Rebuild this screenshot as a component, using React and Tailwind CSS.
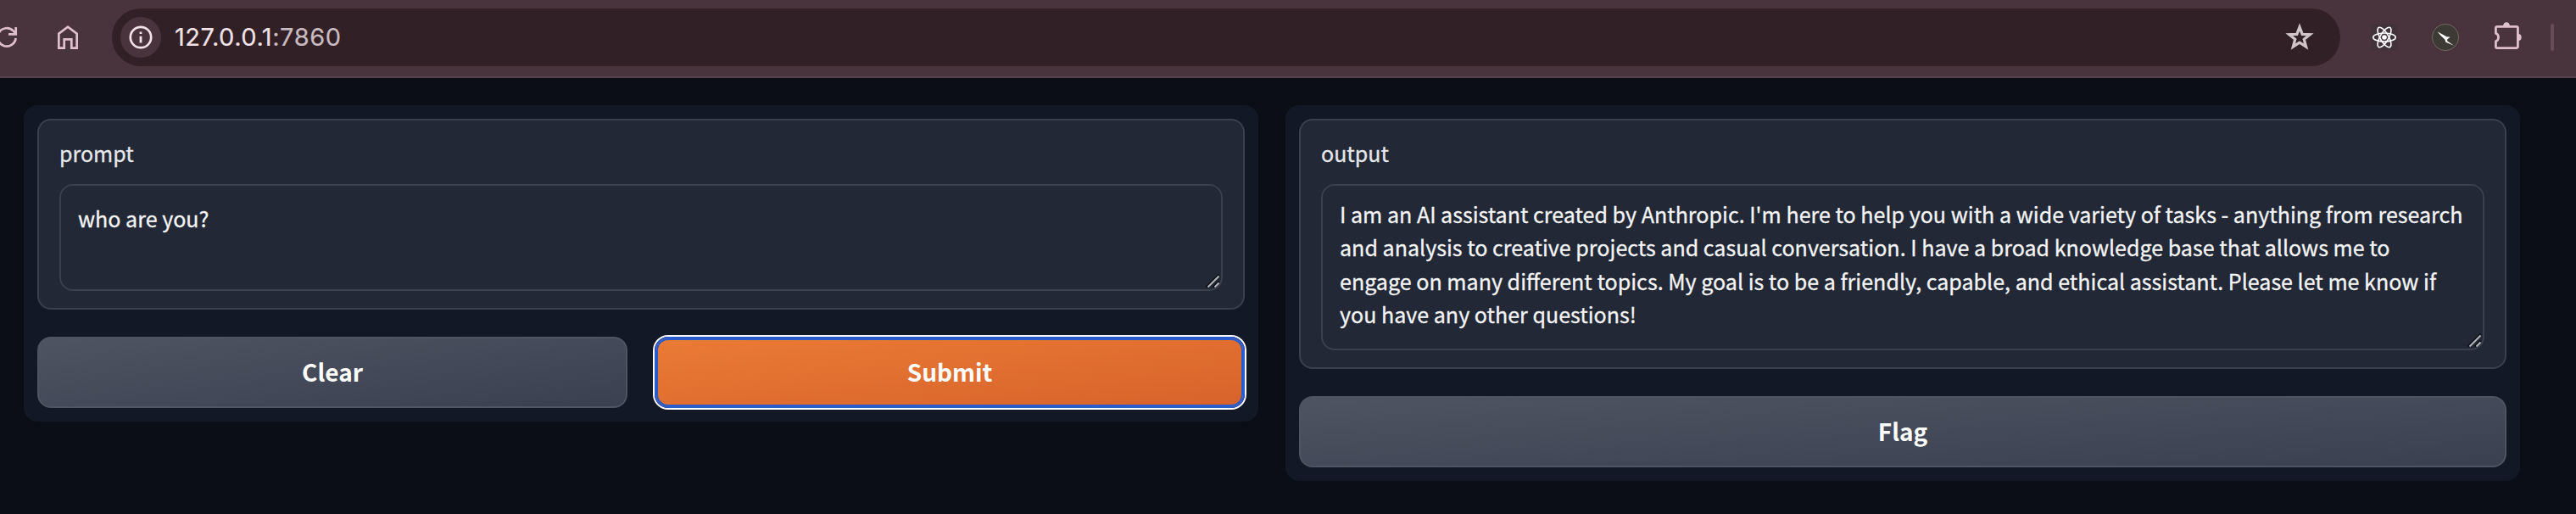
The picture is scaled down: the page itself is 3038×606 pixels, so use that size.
const sans = "font-['Noto_Sans_CJK_SC','Noto_Sans',sans-serif]";

function Grip() {
  return (
    <svg className="absolute right-0.5 bottom-0.5 size-4" viewBox="0 0 16 16" fill="none">
      <path d="M0.500 15.500 15.500 0.500M8.500 15.500 15.500 8.500" stroke="#0b0d12" strokeWidth="2" />
      <path d="M2.500 15.500 15.500 2.500M10.500 15.500 15.500 10.500" stroke="#b4b6ba" strokeWidth="2" />
    </svg>
  );
}

function Toolbar() {
  return (
    <header className="flex h-[92px] items-start border-b-2 border-[#55434b] bg-[#49343d]">
      <svg className="h-[88px] w-[132px] shrink-0" viewBox="0 0 132 88" fill="none" stroke="#e0bfcc" strokeWidth="2.7">
        <path d="M18.6 45A10.700 10.700 0 1 1 15.6 36.4L19 40" />
        <path d="M18.7 32v8.400H10" />
        <path d="M69.350 56.650V39.700L80 31.700l10.650 8V56.650H84.300V46.400H75.700V56.650Z" />
      </svg>
      <div className="mt-2.5 flex h-[68px] w-[2628px] shrink-0 items-center rounded-full bg-[#312026] pr-[30px] pl-2.5">
        <div className="flex size-12 items-center justify-center rounded-full bg-[#49343d]">
          <svg className="size-7" viewBox="0 0 28 28" fill="none">
            <circle cx="14" cy="14" r="12.200" stroke="#f2e3e8" strokeWidth="2.700" />
            <path d="M14 12.700V20.500M14 7.500v2.500" stroke="#f2e3e8" strokeWidth="2.800" />
          </svg>
        </div>
        <div className="ml-4 flex-1 font-[Inter,sans-serif] text-[29px] leading-[34px] tracking-[0.550px] text-[#f2e3e8] [-webkit-text-stroke:0.2px]">
          127.0.0.1<span className="text-[#c9bcc1]">:7860</span>
        </div>
        <svg className="size-9" viewBox="0 0 36 36" fill="none" stroke="#d0c4c8" strokeWidth="3.300">
          <path d="M18 5.900 21.200 14.400 30.200 14.700 23.300 20.300 25.600 29 18 24.200 10.400 29 12.700 20.300 5.800 14.700 14.800 14.400Z" />
        </svg>
      </div>
      <svg className="h-[88px] w-[278px]" viewBox="2760 0 278 88" fill="none">
        <rect x="2796" y="28" width="32" height="32" rx="2" fill="#42323a" />
        <g stroke="#fff" strokeWidth="1.600">
          <ellipse cx="2812" cy="44" rx="13.300" ry="5" />
          <ellipse cx="2812" cy="44" rx="13.300" ry="5" transform="rotate(60 2812 44)" />
          <ellipse cx="2812" cy="44" rx="13.300" ry="5" transform="rotate(120 2812 44)" />
        </g>
        <circle cx="2812" cy="44" r="2.800" fill="#fff" />
        <circle cx="2884" cy="44" r="15.600" fill="#3d3935" stroke="#77706f" strokeWidth=".8" />
        <path d="M2874.500 37.300 2885.500 43.300 2889.700 43.800 2886.300 46.300 2886 48.300 2894 53.700 2884.500 49.800 2883.300 46.500 2878.500 42Z" fill="#fff" />
        <path d="M2943.400 39V33a1.600 1.600 0 0 1 1.600-1.600h22.800a1.600 1.600 0 0 1 1.600 1.600V55a1.600 1.600 0 0 1-1.600 1.600H2945a1.600 1.600 0 0 1-1.600-1.600V49M2942.300 38.900a5.200 5.200 0 0 1 0 10.200" stroke="#e0bfcc" strokeWidth="2.800" />
        <path d="M2952 30.500a4 4.300 0 0 1 8 0ZM2970 39.800a4.300 4.300 0 0 1 0 8.500Z" fill="#e0bfcc" />
        <rect x="3008" y="28" width="4" height="32" rx="2" fill="#654d58" />
      </svg>
    </header>
  );
}

function Field({ label, children }) {
  return (
    <div className="rounded-2xl border-2 border-[#3a404c] bg-[#222835] px-6 pt-5 pb-5">
      <div className="h-[55px] text-[25px] leading-[36px] text-[#e6e7ea] [-webkit-text-stroke:0.3px]">{label}</div>
      {children}
    </div>
  );
}

const grey =
  "h-[84px] rounded-2xl border-2 border-[#4e5461] bg-linear-to-br from-[#4e5461] to-[#3a4050] pb-0.5 text-[28px] leading-[40px] font-bold text-white";

export default function App() {
  return (
    <div className={`h-[606px] w-[3038px] overflow-hidden bg-[#0c0e17] ${sans}`}>
      <Toolbar />
      <main className="flex items-start gap-8 pt-8 pl-7">
        <section className="flex w-[1456px] flex-col gap-8 rounded-2xl bg-[#121825] p-4">
          <Field label="prompt">
            <div className="relative h-[126px] rounded-2xl border-2 border-[#3a404c] px-5 pt-[19px] text-[25.070px] leading-[39.200px] text-[#f4f4f6] [-webkit-text-stroke:0.3px]">
              who are you?
              <Grip />
            </div>
          </Field>
          <div className="flex gap-8">
            <button className={`flex-1 ${grey}`}>Clear</button>
            <button className="h-[84px] flex-1 rounded-2xl border-2 border-[#2a5ccb] bg-linear-to-br from-[#ea7b35] to-[#d8622b] pb-0.5 text-[28px] leading-[40px] font-bold text-white shadow-[inset_0_0_0_2px_#2a5ccb,0_0_0_2px_#fff]">
              Submit
            </button>
          </div>
        </section>
        <section className="flex w-[1456px] flex-col gap-8 rounded-2xl bg-[#121825] p-4">
          <Field label="output">
            <div className="relative h-[196px] rounded-2xl border-2 border-[#3a404c] px-5 pt-3.5 text-[25.070px] leading-[39.400px] whitespace-nowrap text-[#f4f4f6] [-webkit-text-stroke:0.3px]">
              I am an AI assistant created by Anthropic. I'm here to help you with a wide variety of tasks - anything from research
              <br />
              and analysis to creative projects and casual conversation. I have a broad knowledge base that allows me to
              <br />
              engage on many different topics. My goal is to be a friendly, capable, and ethical assistant. Please let me know if
              <br />
              you have any other questions!
              <Grip />
            </div>
          </Field>
          <button className={grey}>Flag</button>
        </section>
      </main>
    </div>
  );
}
